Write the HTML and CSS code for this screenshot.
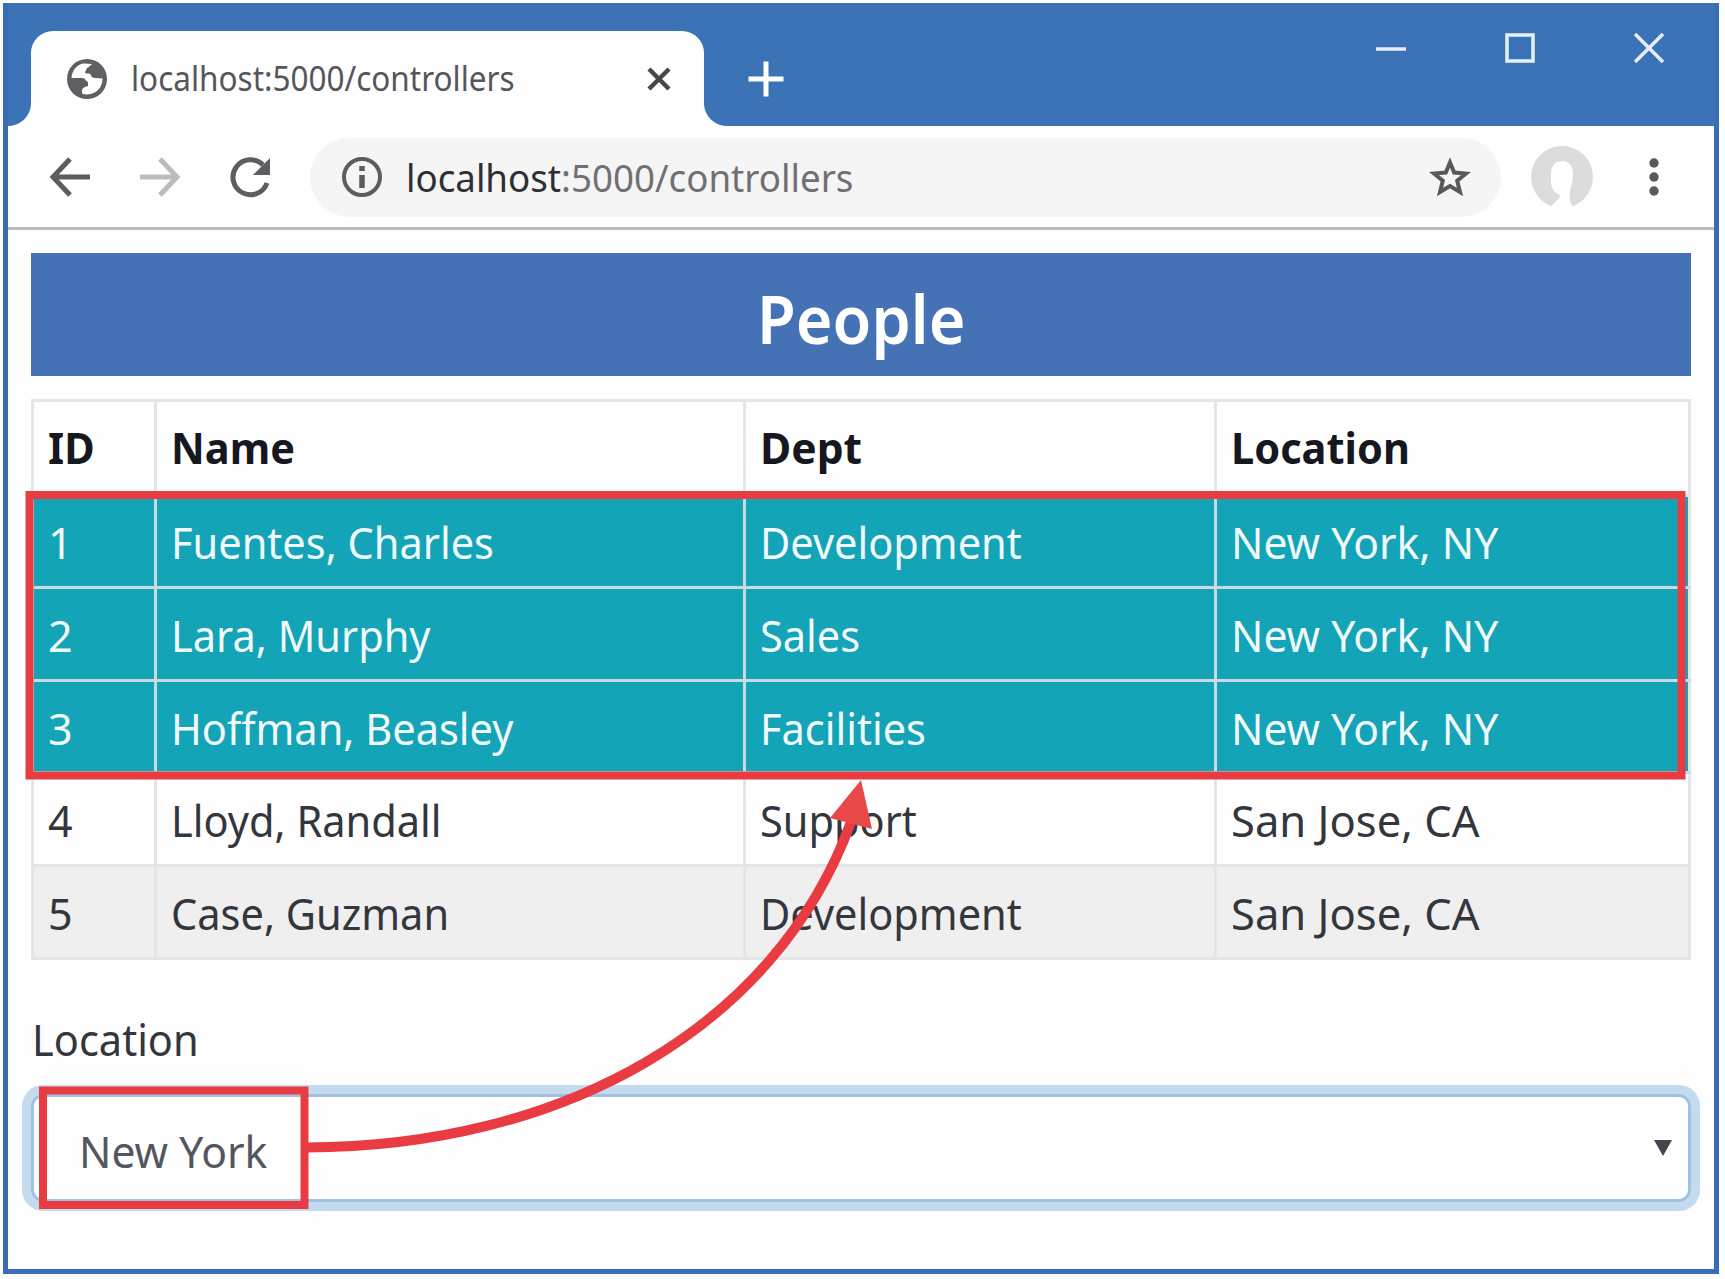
FILE: index.html
```
<!DOCTYPE html>
<html lang="en">
<head>
<meta charset="utf-8">
<title>People</title>
<link rel="stylesheet" href="styles.css">
</head>
<body>
<div class="window">
  <header class="titlebar">
    <div class="tab">
      <svg class="globe" viewBox="0 0 40 40"><circle cx="20" cy="20" r="20"/><path d="M4.500 19C5 12 9 6 16 4.500L25 5C23 8 19 8 19 12 17 13 18 15 22 14.500 25 15 23 19 28 19L35.500 19.500C35.500 28 30 35 20 35.500L15.500 35C14 30 16 28 21 27V23C18 22 19 19 15 19Z"/></svg>
      <span class="text tab-title">localhost:5000/controllers</span>
      <svg class="tab-close" viewBox="0 0 24 24"><path d="M2 2 22 22M22 2 2 22"/></svg>
    </div>
    <svg class="new-tab" viewBox="0 0 36 36"><path d="M18 .5v35M.5 18h35"/></svg>
    <div class="controls">
      <svg viewBox="0 0 30 30"><path d="M0 16h30"/></svg>
      <svg viewBox="0 0 30 30"><path d="M2 2h26v26H2z"/></svg>
      <svg viewBox="0 0 30 30"><path d="M1 1 29 29M29 1 1 29"/></svg>
    </div>
  </header>
  <nav class="toolbar">
    <svg class="nav-icon" viewBox="0 0 40 40"><path d="M20 2 3 20 20 38M3 20H40"/></svg>
    <svg class="nav-icon nav-icon-off" viewBox="0 0 40 40"><path d="M20 2 37 20 20 38M37 20H0"/></svg>
    <svg class="nav-icon" viewBox="0 0 40 40"><path d="M37 26A17.500 17.500 0 1 1 33 8"/><path class="solid" d="M40 1v17H23z"/></svg>
    <div class="address">
      <svg class="info" viewBox="0 0 40 40"><circle cx="20" cy="20" r="18"/><path d="M20 18v13M20 9v5"/></svg>
      <span class="text url"><b>localhost</b>:5000/controllers</span>
      <svg class="star" viewBox="0 0 42 40"><path d="M21 5.500 25.200 15.500 37 16.500 28.200 23.800 31 35 21 29 11 35 13.800 23.800 5 16.500 16.800 15.500z"/></svg>
    </div>
    <svg class="avatar" viewBox="0 0 62 62"><circle cx="31" cy="31" r="31" fill="#dcdcdd"/><path fill="#fff" d="M31 15C24 15 20 20 20 28C20 36 19 40 23 45C26 49 29 47 29 50C29 53 21 57 19 63H43C39 57 38 52 39 45C40 39 42 36 42 28C42 20 38 15 31 15z"/></svg>
    <svg class="more" viewBox="0 0 10 38"><circle cx="5" cy="5" r="4.700"/><circle cx="5" cy="19" r="4.700"/><circle cx="5" cy="33" r="4.700"/></svg>
  </nav>
  <main class="page">
    <h1 class="banner"><span class="text">People</span></h1>
    <table class="people">
      <colgroup><col class="c-id"><col class="c-name"><col class="c-dept"><col></colgroup>
      <thead><tr><th><span class="text">ID</span></th><th><span class="text">Name</span></th><th><span class="text wide">Dept</span></th><th><span class="text">Location</span></th></tr></thead>
      <tbody>
        <tr class="match"><td>1</td><td><span class="text">Fuentes, Charles</span></td><td><span class="text">Development</span></td><td><span class="text wide">New York, NY</span></td></tr>
        <tr class="match"><td>2</td><td><span class="text">Lara, Murphy</span></td><td><span class="text">Sales</span></td><td><span class="text wide">New York, NY</span></td></tr>
        <tr class="match"><td>3</td><td><span class="text">Hoffman, Beasley</span></td><td><span class="text">Facilities</span></td><td><span class="text wide">New York, NY</span></td></tr>
        <tr><td>4</td><td><span class="text">Lloyd, Randall</span></td><td><span class="text">Support</span></td><td><span class="text wider">San Jose, CA</span></td></tr>
        <tr class="stripe"><td>5</td><td><span class="text">Case, Guzman</span></td><td><span class="text">Development</span></td><td><span class="text wider">San Jose, CA</span></td></tr>
      </tbody>
    </table>
    <label class="field-label"><span class="text">Location</span></label>
    <div class="select"><span class="text wide">New York</span><svg class="caret" viewBox="0 0 18 16"><path d="M0 0h18L9 16z"/></svg></div>
  </main>
</div>
<svg class="callouts" viewBox="0 0 1725 1279">
  <rect x="29.500" y="495" width="1652" height="280.500"/>
  <rect x="43" y="1090.500" width="261.500" height="114.500"/>
  <path d="M306 1147.500C560 1147 775 1030 851 822"/>
  <path class="head" d="M861 780 830 818 872 829z"/>
</svg>
</body>
</html>
```
FILE: styles.css
```
* { box-sizing: border-box; }
body {
  margin: 0;
  width: 1725px;
  height: 1279px;
  padding: 3px 6px 5px 3px;
  background: #fdfdfe;
  font-family: "Noto Sans", "Open Sans", sans-serif;
  color: #33363c;
  overflow: hidden;
}
.text { display: inline-block; white-space: nowrap; transform: scaleX(.966); transform-origin: left center; }
.wide { transform: scaleX(.991); }
.wider { transform: scaleX(1.013); }
.window {
  height: 1271px;
  display: flex;
  flex-direction: column;
  border: 5px solid #3a6db3;
  border-top: 0;
  background: #fefefe;
}
.titlebar {
  height: 123px;
  display: flex;
  align-items: flex-start;
  background: #3b73b6;
}
.tab {
  position: relative;
  width: 673px;
  height: 95px;
  margin: 28px 0 0 23px;
  padding: 0 33px 0 36px;
  display: flex;
  align-items: center;
  background: #fefefe;
  border-radius: 22px 22px 0 0;
}
.tab::before, .tab::after {
  content: "";
  position: absolute;
  bottom: 0;
  width: 23px;
  height: 23px;
}
.tab::before { left: -23px; background: radial-gradient(circle at 0 0, transparent 22.5px, #fefefe 23.5px); }
.tab::after { right: -23px; background: radial-gradient(circle at 100% 0, transparent 22.5px, #fefefe 23.5px); }
.globe { width: 40px; height: 40px; fill: #5f6063; }
.globe path { fill: #fefefe; }
.tab-title { margin: -2px 0 0 24px; font-size: 34px; color: #55565c; transform: scaleX(.926); }
.tab-close { width: 24px; height: 24px; margin-left: auto; fill: none; stroke: #47474a; stroke-width: 4.5; }
.new-tab { width: 36px; height: 36px; margin: 58px 0 0 44px; fill: none; stroke: #fff; stroke-width: 5; }
.controls { display: flex; gap: 99px; margin: 30px 50px 0 auto; }
.controls svg { width: 30px; height: 30px; fill: none; stroke: #e6effa; stroke-width: 3.5; }
.toolbar {
  height: 104px;
  display: flex;
  align-items: center;
  padding: 1px 55px 0 42px;
  border-bottom: 3px solid #bebebe;
}
.nav-icon { width: 40px; height: 40px; margin-right: 50px; fill: none; stroke: #5c5d61; stroke-width: 5; overflow: visible; }
.nav-icon .solid { fill: #5c5d61; stroke: none; }
.nav-icon-off { stroke: #bcbcbd; }
.address {
  width: 1191px;
  height: 79px;
  margin-left: -10px;
  padding: 0 30px 0 32px;
  display: flex;
  align-items: center;
  background: #f5f5f5;
  border-radius: 40px;
}
.info { width: 40px; height: 40px; fill: none; stroke: #5c5d61; stroke-width: 4; }
.info path { stroke-width: 5.5; }
.url { margin-left: 24px; font-size: 38px; color: #707074; }
.url b { font-weight: 400; color: #2e2f36; }
.star { width: 42px; height: 40px; margin-left: auto; fill: none; stroke: #58595c; stroke-width: 4; }
.avatar { width: 62px; height: 62px; margin-left: 30px; }
.more { width: 10px; height: 38px; margin-left: 56px; fill: #58595c; }
.page { flex: 1; padding: 23px 23px 0; }
.banner {
  height: 123px;
  margin: 0 0 23px;
  padding-top: 6px;
  display: flex;
  align-items: center;
  justify-content: center;
  background: #4472b4;
  color: #fff;
  font-size: 66px;
  font-weight: 600;
}
.banner .text { transform: scaleX(.954); transform-origin: center; }
.people { width: 1660px; table-layout: fixed; border-collapse: collapse; font-size: 43px; }
.people th, .people td { height: 92.6px; padding: 4px 0 0 14px; border: 3px solid #e4e5e6; text-align: left; line-height: 60px; }
.people th { height: 94.6px; padding-top: 0; color: #17181f; font-weight: 700; }
.c-id { width: 123px; }
.c-name { width: 589px; }
.c-dept { width: 471px; }
.match { background: #13a4b8; color: #f1f9fb; }
.people .match td { border-color: #cbd9e1; }
.people .match td:last-child { border-right-color: #e4e5e6; }
.stripe { background: #efefef; }
.field-label { display: block; margin: 50px 0 0 1px; font-size: 43px; line-height: 60px; }
.select {
  height: 108px;
  margin-top: 24px;
  padding: 0 16px 0 45px;
  display: flex;
  align-items: center;
  justify-content: space-between;
  border: 3px solid #9fc2e1;
  border-radius: 12px;
  box-shadow: 0 0 0 9px #c4daee;
  font-size: 43px;
  color: #53565e;
}
.select .text { padding-top: 8px; }
.caret { width: 18px; height: 16px; fill: #46474e; }
.callouts { position: absolute; left: 0; top: 0; width: 1725px; height: 1279px; fill: none; stroke: #e93c42; stroke-width: 8; }
.callouts path { stroke-width: 10; }
.callouts .head { fill: #e94848; stroke: none; }
```
